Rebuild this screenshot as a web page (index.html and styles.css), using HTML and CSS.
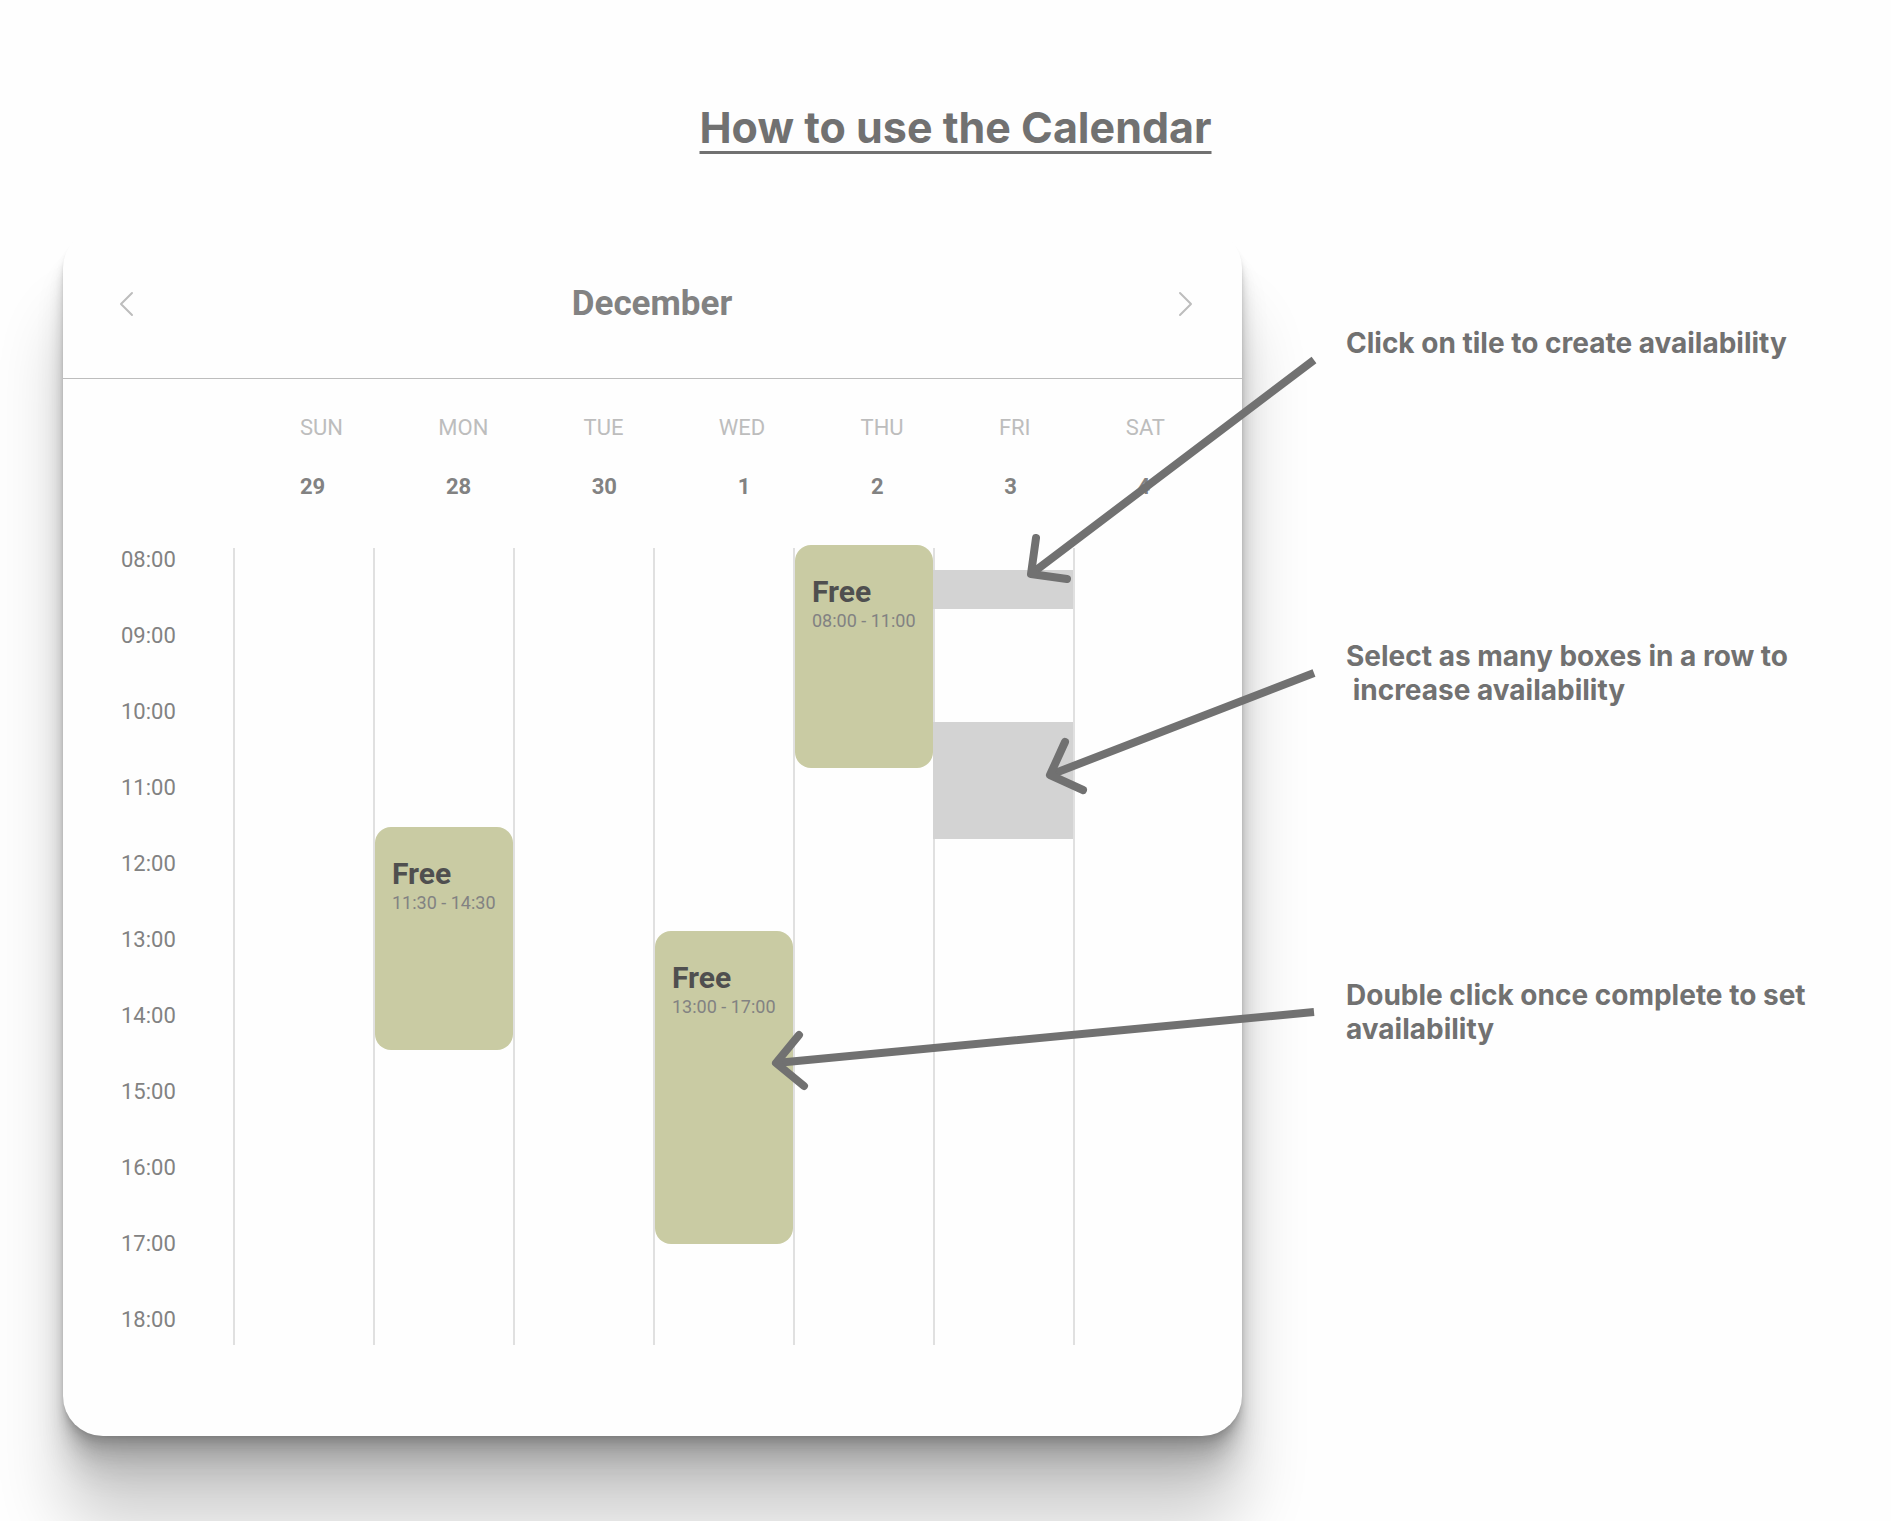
FILE: index.html
```html
<!DOCTYPE html>
<html lang="en">
<head>
<meta charset="utf-8">
<meta name="viewport" content="width=device-width, initial-scale=1">
<title>How to use the Calendar</title>
<link rel="stylesheet" href="styles.css">
</head>
<body>
<header class="page-header">
  <h1 class="page-title">How to use the Calendar</h1>
</header>
<main class="guide">
  <section class="calendar" aria-label="Calendar">
    <header class="month">
      <button class="month-nav" type="button" aria-label="Previous month">
        <svg width="16" height="26" viewBox="0 0 16 26"><path d="M14 2 3 13l11 11"/></svg>
      </button>
      <h2 class="month-name">December</h2>
      <button class="month-nav" type="button" aria-label="Next month">
        <svg width="16" height="26" viewBox="0 0 16 26"><path d="m2 2 11 11L2 24"/></svg>
      </button>
    </header>
    <div class="week week-names">
      <span>SUN</span><span>MON</span><span>TUE</span><span>WED</span><span>THU</span><span>FRI</span><span>SAT</span>
    </div>
    <div class="week week-dates">
      <span>29</span><span>28</span><span>30</span><span>1</span><span>2</span><span>3</span><span>4</span>
    </div>
    <div class="schedule">
      <ol class="hours">
        <li>08:00</li><li>09:00</li><li>10:00</li><li>11:00</li><li>12:00</li><li>13:00</li>
        <li>14:00</li><li>15:00</li><li>16:00</li><li>17:00</li><li>18:00</li>
      </ol>
      <div class="days">
        <div class="day"></div>
        <div class="day">
          <article class="event" style="margin-top:279px;height:223px">
            <h3 class="event-title">Free</h3>
            <p class="event-time">11:30 - 14:30</p>
          </article>
        </div>
        <div class="day"></div>
        <div class="day">
          <article class="event" style="margin-top:383px;height:313px">
            <h3 class="event-title">Free</h3>
            <p class="event-time">13:00 - 17:00</p>
          </article>
        </div>
        <div class="day">
          <article class="event" style="margin-top:-3px;height:223px">
            <h3 class="event-title">Free</h3>
            <p class="event-time">08:00 - 11:00</p>
          </article>
        </div>
        <div class="day">
          <div class="selection" style="margin-top:22px;height:39px"></div>
          <div class="selection" style="margin-top:113px;height:117px"></div>
        </div>
        <div class="day"></div>
      </div>
    </div>
  </section>
  <aside class="notes">
    <p>Click on tile to create availability</p>
    <p>Select as many boxes in a row to<br>&nbsp;increase availability</p>
    <p>Double click once complete to set<br>availability</p>
  </aside>
  <svg class="arrows" viewBox="0 0 1891 1208" preserveAspectRatio="none" aria-hidden="true">
    <path class="shaft" d="M1314 132 1031 346M1314 445 1050 547M1314 784 776 835"/>
    <path class="head" d="M1036 310 1031 346 1067 351M1065 514 1050 547 1083 562M799 807 776 835 804 858"/>
  </svg>
</main>
</body>
</html>
```

FILE: styles.css
```css
* {
  box-sizing: border-box;
}

body {
  margin: 0;
  background: #fefefe;
  font-family: Roboto, "Liberation Sans", sans-serif;
  overflow-x: hidden;
}

h1, h2, h3, p, ol {
  margin: 0;
  padding: 0;
}

.page-header {
  padding: 101px 0 75px 20px;
  text-align: center;
}

.page-title {
  color: #717171;
  font: 700 43px/52px Inter, "Liberation Sans", sans-serif;
  text-decoration: underline;
  text-decoration-thickness: 3px;
  text-underline-offset: 8px;
}

.guide {
  position: relative;
  display: grid;
  grid-template-columns: 1179fr 545fr;
  column-gap: 104px;
  padding: 0 0 85px 63px;
}

.calendar {
  background: #fefefe;
  border-radius: 40px;
  padding-bottom: 78px;
  box-shadow:
    0 88px 67px rgba(0, 0, 0, 0.19),
    0 37px 28px rgba(0, 0, 0, 0.12),
    0 20px 15px rgba(0, 0, 0, 0.1),
    0 11px 8px rgba(0, 0, 0, 0.09),
    0 6px 4px rgba(0, 0, 0, 0.07),
    0 2px 2px rgba(0, 0, 0, 0.05);
}

.month {
  display: grid;
  grid-template-columns: 16px 1fr 16px;
  align-items: center;
  height: 151px;
  padding: 2px 48px 0 55px;
  border-bottom: 1px solid #bdbdbd;
}

.month-nav {
  display: flex;
  padding: 0;
  border: 0;
  background: none;
  cursor: pointer;
}

.month-nav path {
  fill: none;
  stroke: #bdbdbd;
  stroke-width: 2;
  stroke-linecap: round;
  stroke-linejoin: round;
}

.month-name {
  padding-right: 8px;
  color: #828282;
  font-size: 35px;
  font-weight: 700;
  line-height: 42px;
  text-align: center;
}

.week {
  display: flex;
  justify-content: space-between;
  font-size: 22px;
  line-height: 26px;
}

.week-names {
  padding: 36px 77px 0 237px;
  color: #bdbdbd;
}

.week-dates {
  padding: 33px 92px 0 237px;
  color: #828282;
  font-weight: 700;
}

.schedule {
  display: grid;
  grid-template-columns: 170px 1fr;
  padding-top: 22px;
}

.hours {
  padding-left: 58px;
  list-style: none;
  color: #828282;
  font-size: 22px;
  line-height: 76px;
}

.days {
  display: grid;
  grid-template-columns: repeat(6, 140fr) 169fr;
  margin: 26px 0 13px;
}

.day {
  display: flow-root;
  border-left: 2px solid #e0e0e0;
}

.event {
  padding: 29px 0 0 17px;
  border-radius: 16px;
  background: #c9cba3;
}

.event-title {
  color: #4f4f4f;
  font-size: 30px;
  font-weight: 700;
  line-height: 36px;
}

.event-time {
  color: #828282;
  font-size: 18px;
  line-height: 22px;
  white-space: nowrap;
}

.selection {
  margin-left: -2px;
  background: #d3d3d3;
}

.notes {
  display: grid;
  grid-template-rows: 313px 339px auto;
  padding-top: 98px;
  color: #717171;
  font: 700 28px/34px Inter, "Liberation Sans", sans-serif;
}

.arrows {
  position: absolute;
  inset: 0 0 auto;
  width: 100%;
  height: 1208px;
  fill: none;
  stroke: #717171;
  stroke-width: 8;
  pointer-events: none;
}

.arrows path {
  vector-effect: non-scaling-stroke;
}

.head {
  stroke-linecap: round;
  stroke-linejoin: round;
}
```
